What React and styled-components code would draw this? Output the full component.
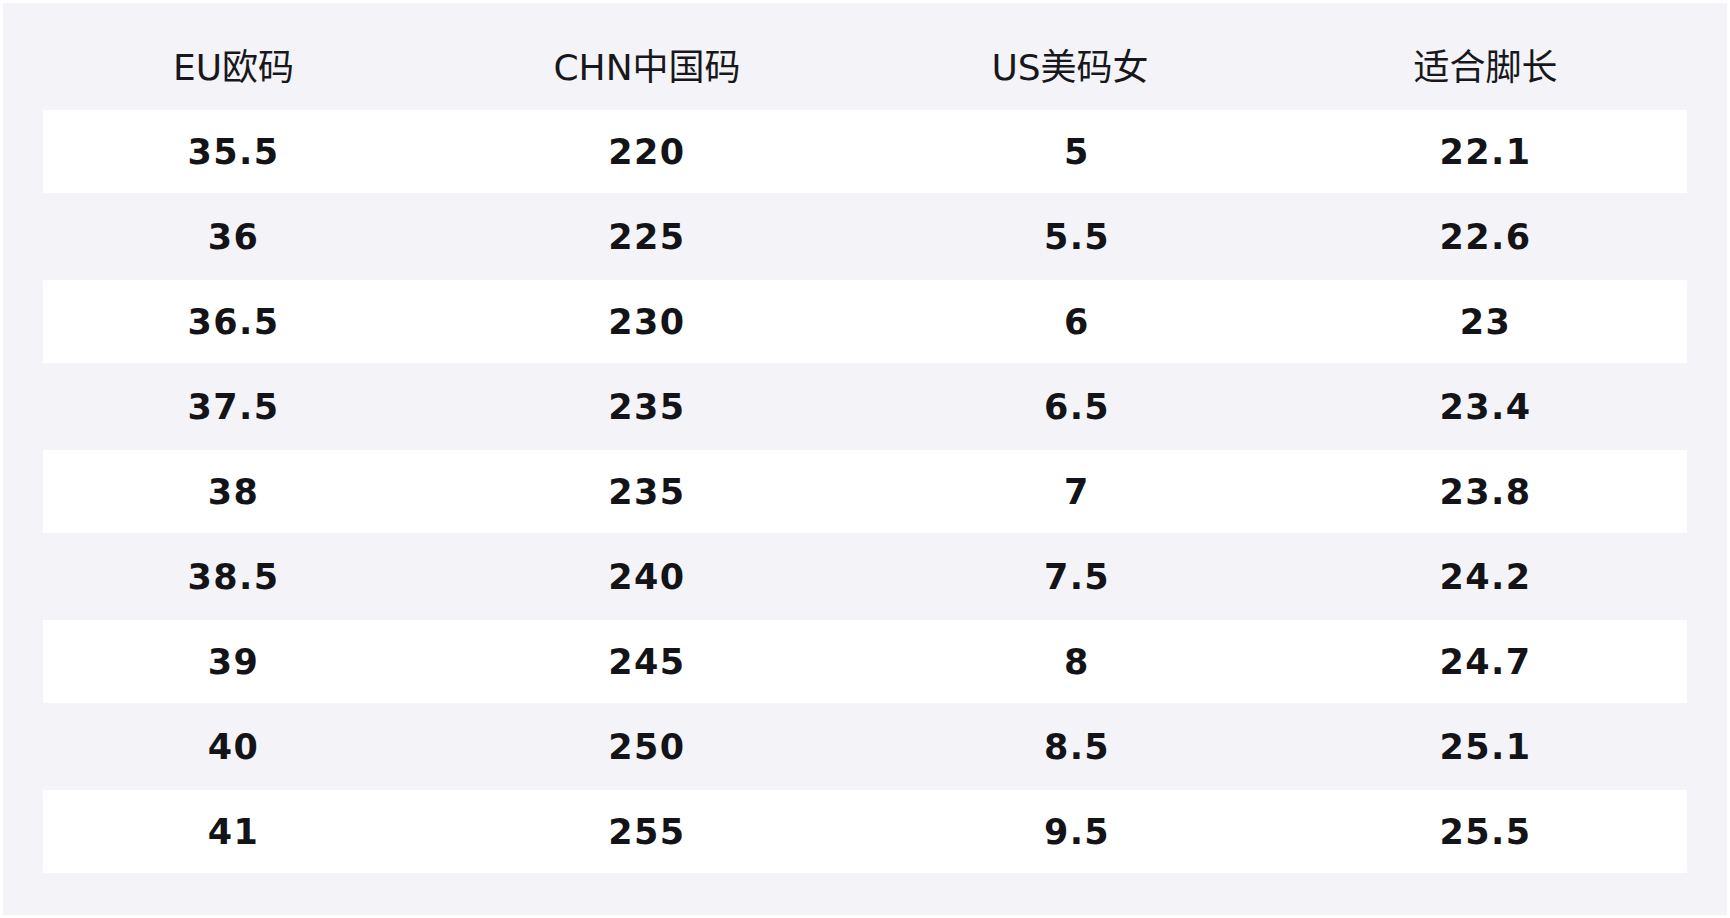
import React from "react";
import styled, { createGlobalStyle } from "styled-components";

const GlobalStyle = createGlobalStyle`
  html, body {
    margin: 0;
    padding: 0;
    background: #ffffff;
  }
  body {
    padding: 3px;
    font-family: "DejaVu Sans", "Noto Sans CJK SC", sans-serif;
  }
`;

const Panel = styled.div`
  height: 912px;
  box-sizing: border-box;
  background-color: #f4f4f8;
  padding: 0 40px 42px;
  display: flex;
  flex-direction: column;
`;

const columns = "381fr 446fr 414fr 403fr";

const HeaderRow = styled.div`
  display: grid;
  grid-template-columns: ${columns};
  height: 107px;
  padding-top: 15px;
  box-sizing: border-box;
  align-items: center;
`;

const HeaderCell = styled.div`
  text-align: center;
  font-size: 36px;
  font-weight: 400;
  color: #18181c;
  padding-right: ${props => props.trail || 0}px;
`;

const Row = styled.div`
  display: grid;
  grid-template-columns: ${columns};
  align-items: center;
  height: ${props => (props.striped ? "83px" : "87px")};
  background-color: ${props => (props.striped ? "#ffffff" : "transparent")};
`;

const Cell = styled.div`
  text-align: center;
  font-size: 35px;
  font-weight: 700;
  letter-spacing: 1.4px;
  color: #141418;
`;

const headers = [
  { label: "EU欧码" },
  { label: "CHN中国码" },
  { label: "US美码女", trail: 14 },
  { label: "适合脚长" }
];

const sizes = [
  ["35.5", "220", "5", "22.1"],
  ["36", "225", "5.5", "22.6"],
  ["36.5", "230", "6", "23"],
  ["37.5", "235", "6.5", "23.4"],
  ["38", "235", "7", "23.8"],
  ["38.5", "240", "7.5", "24.2"],
  ["39", "245", "8", "24.7"],
  ["40", "250", "8.5", "25.1"],
  ["41", "255", "9.5", "25.5"]
];

export default function App() {
  return (
    <>
      <GlobalStyle />
      <Panel>
        <HeaderRow>
          {headers.map(h => (
            <HeaderCell key={h.label} trail={h.trail}>
              {h.label}
            </HeaderCell>
          ))}
        </HeaderRow>
        {sizes.map((row, i) => (
          <Row key={row[0]} striped={i % 2 === 0}>
            {row.map((v, j) => (
              <Cell key={j}>{v}</Cell>
            ))}
          </Row>
        ))}
      </Panel>
    </>
  );
}
